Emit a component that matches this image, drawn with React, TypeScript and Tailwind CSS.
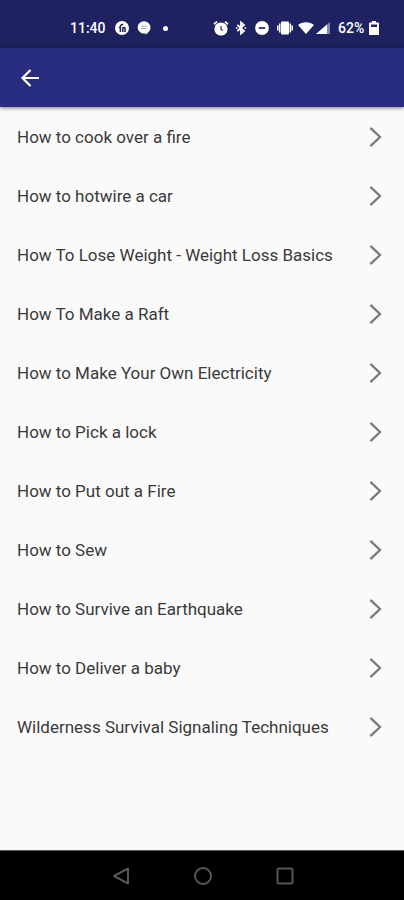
import React from 'react';

const guides = [
    'How to cook over a fire',
    'How to hotwire a car',
    'How To Lose Weight - Weight Loss Basics',
    'How To Make a Raft',
    'How to Make Your Own Electricity',
    'How to Pick a lock',
    'How to Put out a Fire',
    'How to Sew',
    'How to Survive an Earthquake',
    'How to Deliver a baby',
    'Wilderness Survival Signaling Techniques',
];

const StatusBar = () => (
    <div className="h-12 shrink-0 bg-[#1f2260] text-white flex items-center justify-between pl-[70px] pr-[25px] pt-2">
        <div className="flex items-center">
            <span className="w-[37px] text-sm font-medium">11:40</span>
            <svg className="ml-2 w-[14px] h-[14px]" viewBox="0 0 14 14">
                <circle cx="7" cy="7" r="7" fill="#fff" />
                <path d="M5.4 11V5.8C5.4 4.2 6.3 3.2 8.2 3.5M7.8 11V6.8c1.6-.8 2.2-.3 2.2 .8V11M3.8 6.6h1.6" fill="none" stroke="#1f2260" strokeWidth="1.5" />
            </svg>
            <svg className="ml-2 w-[14px] h-[14px]" viewBox="0 0 14 14">
                <path d="M7 .3a6.4 6.4 0 0 1 6.5 6.2c0 3-2.3 5.4-5 7.2v-1.4A6.2 6.2 0 0 1 .6 6.5 6.3 6.3 0 0 1 7 .3z" fill="#fff" />
                <path d="M4.3 5.2h5.4M4.3 7.5h5" stroke="#a5a7c8" strokeWidth="1" />
            </svg>
            <span className="ml-3 w-[5px] h-[5px] rounded-full bg-white" />
        </div>
        <div className="flex items-center">
            <svg className="w-4 h-4" viewBox="0 0 16 16">
                <circle cx="8" cy="9" r="6.6" fill="#fff" />
                <path d="M1 4.2l3-2.6M15 4.2l-3-2.6" stroke="#fff" strokeWidth="1.8" />
                <path d="M8 6v3.5l2 1" fill="none" stroke="#1f2260" strokeWidth="1.1" />
            </svg>
            <svg className="ml-[6px] w-3 h-4" viewBox="0 0 12 16">
                <path d="M2.4 4.8L9 11L6 13.6V2.4L9 5L2.4 11.2" fill="none" stroke="#fff" strokeWidth="1.8" />
                <path d="M.9 8h1.6M9.6 8h1.6" stroke="#fff" strokeWidth="1.6" />
            </svg>
            <svg className="ml-2 w-[14px] h-[14px]" viewBox="0 0 14 14">
                <circle cx="7" cy="7" r="6.9" fill="#fff" />
                <path d="M3.8 7h6.4" stroke="#1f2260" strokeWidth="1.7" />
            </svg>
            <svg className="ml-2 w-4 h-4" viewBox="0 0 16 16">
                <rect x="4" y="1.5" width="8" height="13" rx="1" fill="#fff" />
                <path d="M2.7 3.5v9M13.3 3.5v9M.8 5.5v5M15.2 5.5v5" stroke="#fff" strokeWidth="1.5" />
            </svg>
            <svg className="ml-[5px] w-4 h-3" viewBox="0 0 16 12">
                <path d="M0 3C4.5-.7 11.5-.7 16 3L8 12z" fill="#fff" />
            </svg>
            <svg className="ml-[2px] w-[14px] h-3" viewBox="0 0 14 12">
                <path d="M14 0v12H0z" fill="#fff" opacity=".45" />
                <path d="M11 2.5V12H0z" fill="#fff" />
            </svg>
            <span className="ml-2 w-[31px] text-sm font-medium">62%</span>
            <svg className="w-[10px] h-[14px]" viewBox="0 0 10 14">
                <path d="M3 0h4v1.5h2q1 0 1 1V13q0 1-1 1H1q-1 0-1-1V2.5q0-1 1-1h2z" fill="#fff" />
                <path d="M2 3.5h6V6H2z" fill="#1f2260" />
            </svg>
        </div>
    </div>
);

const AppBar = () => (
    <header className="relative h-[59px] shrink-0 bg-[#292d80] shadow-[0_1px_4px_rgba(0,0,0,0.5)] flex items-center px-5">
        <button type="button" aria-label="Back" className="w-5 h-5 text-white">
            <svg className="w-5 h-5" viewBox="0 0 20 20" fill="none" stroke="currentColor" strokeWidth="2.2">
                <path d="M19 10H3M10.5 2L2.5 10l8 8" />
            </svg>
        </button>
    </header>
);

const GuideRow = ({ title }: { title: string }) => (
    <li>
        <a href="#" className="h-[59px] pl-[17px] pr-[22px] flex items-center justify-between text-[#3a3a3a]">
            <span className="text-[17px] leading-6">{title}</span>
            <svg className="w-[14px] h-[22px] shrink-0" viewBox="0 0 14 22" fill="none" stroke="#7b7b7b" strokeWidth="2.3">
                <path d="M2.4 1.8L12 11L2.4 20.2" />
            </svg>
        </a>
    </li>
);

const NavBar = () => (
    <nav className="h-[50px] shrink-0 bg-black border-t border-[#555] flex items-center justify-center gap-16 pl-px text-[#575757]">
        <button type="button" aria-label="Back">
            <svg className="w-[18px] h-[18px]" viewBox="0 0 18 18" fill="none" stroke="currentColor" strokeWidth="2" strokeLinejoin="round">
                <path d="M16 1.5v15L2 9z" />
            </svg>
        </button>
        <button type="button" aria-label="Home">
            <svg className="w-[18px] h-[18px]" viewBox="0 0 18 18" fill="none" stroke="currentColor" strokeWidth="2">
                <circle cx="9" cy="9" r="8" />
            </svg>
        </button>
        <button type="button" aria-label="Recent apps">
            <svg className="w-[18px] h-[18px]" viewBox="0 0 18 18" fill="none" stroke="currentColor" strokeWidth="2">
                <rect x="1.5" y="1.5" width="15" height="15" rx="1.5" />
            </svg>
        </button>
    </nav>
);

const App = () => {
    return (
        <div className="min-h-screen flex flex-col bg-[#fafafa] font-['Roboto',sans-serif]">
            <StatusBar />
            <AppBar />
            <main className="flex-1">
                <ul>
                    {guides.map((title) => (
                        <GuideRow key={title} title={title} />
                    ))}
                </ul>
            </main>
            <NavBar />
        </div>
    );
};

export default App;
